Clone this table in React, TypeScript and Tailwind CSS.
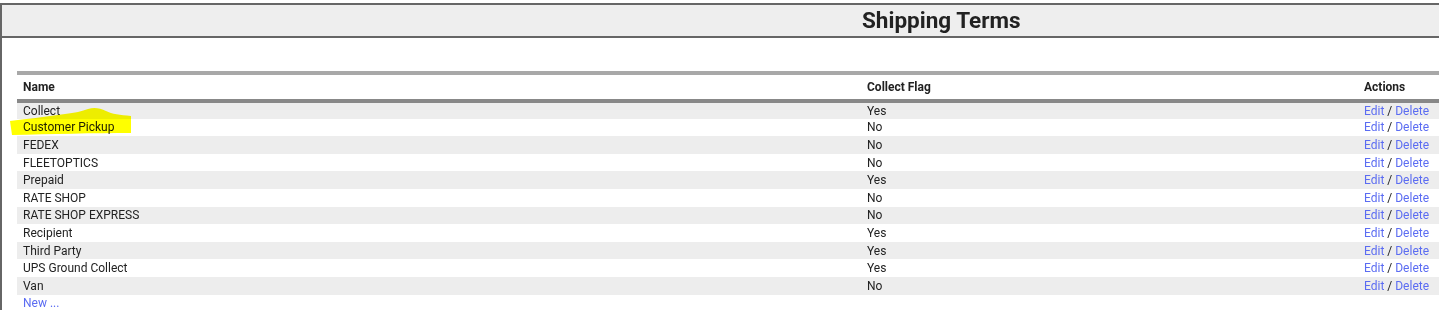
import React from 'react';

const terms = [
  { name: 'Collect', collect: 'Yes' },
  { name: 'Customer Pickup', collect: 'No' },
  { name: 'FEDEX', collect: 'No' },
  { name: 'FLEETOPTICS', collect: 'No' },
  { name: 'Prepaid', collect: 'Yes' },
  { name: 'RATE SHOP', collect: 'No' },
  { name: 'RATE SHOP EXPRESS', collect: 'No' },
  { name: 'Recipient', collect: 'Yes' },
  { name: 'Third Party', collect: 'Yes' },
  { name: 'UPS Ground Collect', collect: 'Yes' },
  { name: 'Van', collect: 'No' },
];

export default function App() {
  return (
    <div
      className="relative min-h-[310px] bg-white pt-[3px] text-[12px] text-[#222]"
      style={{ fontFamily: 'Roboto, "Liberation Sans", sans-serif' }}
    >
      <div className="min-h-[307px] border-l-2 border-[#666]">
        <div className="flex h-[35px] items-center border-y-2 border-[#666] bg-[#eeeeee] pl-[860px]">
          <h1 className="text-[22.5px] font-bold leading-none text-[#222]">Shipping Terms</h1>
        </div>

        <table className="ml-[15px] mt-[33px] w-[1422px] border-collapse">
          <thead>
            <tr className="h-[28px] border-t-4 border-b-4 border-t-[#a8a8a8] border-b-[#888]">
              <th className="w-[844px] pl-[6px] text-left font-bold">Name</th>
              <th className="w-[497px] pl-[6px] text-left font-bold">Collect Flag</th>
              <th className="pl-[6px] text-left font-bold">Actions</th>
            </tr>
          </thead>
          <tbody>
            {terms.map((t, i) => (
              <tr key={t.name} className={`h-[17.6px] ${i % 2 === 0 ? 'bg-[#ededed]' : 'bg-white'}`}>
                <td className="py-0 pl-[6px] leading-none">{t.name}</td>
                <td className="py-0 pl-[6px] leading-none">{t.collect}</td>
                <td className="py-0 pl-[6px] leading-none">
                  <a href="#" className="text-[#5b6cf2]">Edit</a>
                  {' / '}
                  <a href="#" className="text-[#5b6cf2]">Delete</a>
                </td>
              </tr>
            ))}
            <tr className="h-[17.6px]">
              <td className="py-0 pl-[6px] leading-none">
                <a href="#" className="text-[#5b6cf2]">New ...</a>
              </td>
              <td />
              <td />
            </tr>
          </tbody>
        </table>
      </div>

      {/* marker highlight drawn over the row */}
      <svg
        className="pointer-events-none absolute left-0 top-0 mix-blend-multiply"
        width="140"
        height="140"
        viewBox="0 0 140 140"
      >
        <path
          d="M10,121 C25,119 45,117 65,114 C75,113 82,111 88,109 C94,107 100,108 106,111 C112,114 120,115 131,116 L131,133 C95,133 50,134 12,135 Z"
          fill="#ffff00"
        />
      </svg>
    </div>
  );
}
